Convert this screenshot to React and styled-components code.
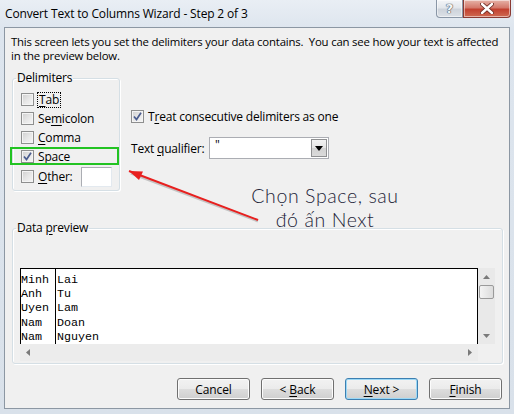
import React from "react";
import styled, { createGlobalStyle } from "styled-components";

const Global = createGlobalStyle`
  html, body { margin: 0; padding: 0; background: #dbe3ec; }
  body { font-family: "Open Sans", "Noto Sans", sans-serif; }
`;

const Frame = styled.div`
  width: 514px;
  height: 414px;
  box-sizing: border-box;
  display: flex;
  flex-direction: column;
  background: linear-gradient(180deg, #e9eef4 0px, #dde5ee 30px, #d9e1ea 100%);
  overflow: hidden;
`;

const TitleBar = styled.div`
  height: 27px;
  flex: none;
  display: flex;
  align-items: flex-start;
  padding: 0 3px 0 5px;
`;

const Title = styled.div`
  flex: 1;
  font-size: 12px;
  line-height: 27px;
  color: #000;
  letter-spacing: -0.15px;
`;

const CaptionButtons = styled.div`
  display: flex;
  height: 18px;
`;

const CaptionButton = styled.div`
  width: ${(p) => p.$w}px;
  height: 18px;
  box-sizing: border-box;
  display: flex;
  align-items: center;
  justify-content: center;
  border: 1px solid ${(p) => (p.$close ? "#8a3a33" : "#8996a6")};
  border-top: none;
  border-radius: ${(p) => (p.$close ? "0 0 4px 0" : "0 0 0 4px")};
  background: ${(p) =>
    p.$close
      ? "linear-gradient(180deg, #e6b3a8 0%, #d4796b 45%, #c2402f 55%, #cf6a52 100%)"
      : "linear-gradient(180deg, #f3f5f8 0%, #e3e7ec 45%, #cdd3db 55%, #dce1e7 100%)"};
  box-shadow: inset 0 0 0 1px rgba(255, 255, 255, 0.5);
  font-family: "DejaVu Sans", sans-serif;
  font-weight: bold;
  color: #fff;
`;

const HelpGlyph = styled.span`
  font-size: 13px;
  color: #f4f6f8;
  text-shadow: 0 0 1px #4a5360, 0 0 1px #4a5360, 0 0 1px #4a5360;
  line-height: 1;
`;

const Client = styled.div`
  position: relative;
  flex: 1;
  margin: 0 4px 5px 4px;
  border: 1px solid #8c97a3;
  background: #f0f0f0;
  display: flex;
  flex-direction: column;
  font-size: 12px;
  color: #000;
`;

const Intro = styled.div`
  margin: 7px 6px 0 6px;
  font-size: 11.4px;
  line-height: 14px;
  letter-spacing: -0.2px;
  white-space: nowrap;
`;

const Middle = styled.div`
  display: flex;
  margin: 8px 0 0 7px;
  gap: 11px;
`;

const Group = styled.fieldset`
  margin: 0;
  box-sizing: border-box;
  width: ${(p) => p.$w}px;
  border: 1px solid #d5dfe5;
  border-radius: 3px;
  box-shadow: inset 1px 1px 0 #fff, 1px 1px 0 #fff;
  padding: ${(p) => p.$pad};
  min-width: 0;
`;

const Legend = styled.legend`
  padding: 0 1px;
  margin-left: ${(p) => p.$ml}px;
  font-size: 12px;
  line-height: 14px;
  letter-spacing: -0.2px;
`;

const CheckRow = styled.div`
  height: ${(p) => p.$h || 19}px;
  display: flex;
  align-items: center;
  gap: 4px;
  letter-spacing: -0.2px;
`;

const Box = styled.span`
  width: 13px;
  height: 13px;
  box-sizing: border-box;
  flex: none;
  border: 1px solid #8e8f8f;
  background: linear-gradient(135deg, #cfcfcf 0%, #e6e6e6 50%, #f6f6f6 100%);
  box-shadow: inset 0 0 0 1px #f4f4f4;
  display: flex;
  align-items: center;
  justify-content: center;
`;

const Focus = styled.span`
  outline: 1px dotted #000;
  outline-offset: 0px;
  padding: 0 1px;
  line-height: 14px;
`;

const U = styled.span`
  text-decoration: underline;
  text-underline-offset: 2px;
`;

const OtherInput = styled.span`
  width: 31px;
  height: 20px;
  box-sizing: border-box;
  margin-left: 4px;
  background: #fff;
  border: 1px solid #abadb3;
  border-color: #abadb3 #e3e9ef #e3e9ef #abadb3;
`;

const RightCol = styled.div`
  display: flex;
  flex-direction: column;
  padding-top: 36px;
`;

const QualRow = styled.div`
  display: flex;
  align-items: center;
  margin-top: 11px;
  letter-spacing: -0.2px;
`;

const QualLabel = styled.span`
  width: 78px;
`;

const Select = styled.div`
  width: 120px;
  height: 22px;
  box-sizing: border-box;
  background: #fff;
  border: 1px solid #abadb3;
  display: flex;
  align-items: stretch;
`;

const SelectValue = styled.span`
  flex: 1;
  padding-left: 5px;
  line-height: 14px;
  font-size: 12px;
`;

const SelectArrow = styled.span`
  width: 16px;
  margin: 1px;
  box-sizing: border-box;
  border: 1px solid #8f9092;
  background: linear-gradient(180deg, #f2f2f2 0%, #e4e4e4 50%, #d2d2d2 51%, #dadada 100%);
  display: flex;
  align-items: center;
  justify-content: center;
`;

const PreviewGroup = styled(Group)`
  margin: 30px 0 0 7px;
`;

const ScrollArea = styled.div`
  display: grid;
  grid-template-columns: 458px 17px;
  grid-template-rows: 76px 17px;
`;

const Sheet = styled.div`
  background: #fff;
  border: 1px solid #000;
  border-bottom: none;
  overflow: hidden;
  position: relative;
  font-family: "Liberation Mono", "Courier New", monospace;
  font-size: 11.7px;
  line-height: 14.2px;
  padding-top: 4px;
`;

const DataRow = styled.div`
  display: flex;
  height: 14.2px;
`;

const Cell = styled.span`
  width: ${(p) => p.$w}px;
  flex: none;
  padding-left: ${(p) => p.$pl || 0}px;
  box-sizing: border-box;
  white-space: nowrap;
`;

const ColLine = styled.div`
  position: absolute;
  left: 34px;
  top: 0;
  bottom: 0;
  width: 1px;
  background: #000;
`;

const VScroll = styled.div`
  background: #e9e9e9;
  display: flex;
  flex-direction: column;
  align-items: center;
  padding-top: 7px;
  box-sizing: border-box;
`;

const Thumb = styled.div`
  width: 15px;
  height: 14px;
  box-sizing: border-box;
  margin-top: 6px;
  border: 1px solid #9a9a9a;
  border-radius: 2px;
  background: linear-gradient(90deg, #f4f4f4, #dcdcdc);
`;

const Spacer = styled.div`
  flex: 1;
`;

const DownArrow = styled.div`
  margin-bottom: 6px;
  display: flex;
`;

const HScroll = styled.div`
  background: #ececec;
  display: flex;
  align-items: center;
  justify-content: space-between;
  padding: 0 6px 0 6px;
`;

const Corner = styled.div`
  background: #f0f0f0;
`;

const ButtonRow = styled.div`
  display: flex;
  justify-content: flex-end;
  gap: 11px;
  margin: 14px 7px 0 0;
`;

const Button = styled.div`
  width: 73px;
  height: 22px;
  box-sizing: border-box;
  border: 1px solid ${(p) => (p.$default ? "#3c7fb1" : "#707070")};
  border-radius: 3px;
  background: linear-gradient(180deg, #f2f2f2 0%, #ebebeb 50%, #dddddd 51%, #cfcfcf 100%);
  box-shadow: inset 0 0 0 1px ${(p) => (p.$default ? "#9bd8f6" : "#fcfcfc")};
  display: flex;
  align-items: center;
  justify-content: center;
  font-size: 12px;
  letter-spacing: -0.1px;
`;

const Highlight = styled.div`
  position: absolute;
  left: 5px;
  top: 119px;
  width: 109px;
  height: 18px;
  box-sizing: border-box;
  border: 2px solid #22c322;
`;

const Note = styled.div`
  position: absolute;
  left: 212px;
  top: 156px;
  width: 216px;
  text-align: center;
  font-family: "Lato", sans-serif;
  font-weight: 300;
  font-size: 19.5px;
  letter-spacing: 0.6px;
  line-height: 24px;
  color: #1d2438;
`;

const ArrowSvg = styled.svg`
  position: absolute;
  left: 118px;
  top: 136px;
  overflow: visible;
`;

function Check() {
  return (
    <svg width="9" height="9" viewBox="0 0 9 9">
      <path d="M1 4.5 L3.5 7.5 L8 0.8" fill="none" stroke="#4b5d8f" strokeWidth="1.7" />
    </svg>
  );
}

function CheckBox({ checked, children }) {
  return (
    <CheckRow>
      <Box>{checked && <Check />}</Box>
      {children}
    </CheckRow>
  );
}

const rows = [
  ["Minh", "Lai"],
  ["Anh", "Tu"],
  ["Uyen", "Lam"],
  ["Nam", "Doan"],
  ["Nam", "Nguyen"],
];

function Tri({ dir }) {
  const d = {
    up: "M0 4 L3.5 0 L7 4 Z",
    down: "M0 0 L7 0 L3.5 4 Z",
    left: "M4 0 L4 7 L0 3.5 Z",
    right: "M0 0 L0 7 L4 3.5 Z",
  }[dir];
  const w = dir === "up" || dir === "down" ? 7 : 4;
  const h = dir === "up" || dir === "down" ? 4 : 7;
  return (
    <svg width={w} height={h} viewBox={`0 0 ${w} ${h}`}>
      <path d={d} fill="#7a7a7a" />
    </svg>
  );
}

export default function App() {
  return (
    <>
      <Global />
      <Frame>
        <TitleBar>
          <Title>Convert Text to Columns Wizard - Step 2 of 3</Title>
          <CaptionButtons>
            <CaptionButton $w={27}>
              <HelpGlyph>?</HelpGlyph>
            </CaptionButton>
            <CaptionButton $w={48} $close>
              <svg width="14" height="11" viewBox="0 0 14 11">
                <path
                  d="M2 1 L12 10 M12 1 L2 10"
                  stroke="#6b2a22"
                  strokeWidth="4.2"
                  strokeLinecap="round"
                />
                <path d="M2 1 L12 10 M12 1 L2 10" stroke="#fff" strokeWidth="2.4" strokeLinecap="round" />
              </svg>
            </CaptionButton>
          </CaptionButtons>
        </TitleBar>
        <Client>
          <Intro>
            This screen lets you set the delimiters your data contains.&nbsp; You can see how your text is affected
            <br />
            in the preview below.
          </Intro>
          <Middle>
            <Group $w={108} $pad="5px 4px 3px 8px">
              <Legend $ml={-5}>Delimiters</Legend>
              <CheckBox>
                <Focus>
                  <U>T</U>ab
                </Focus>
              </CheckBox>
              <CheckBox>
                <span>
                  Se<U>m</U>icolon
                </span>
              </CheckBox>
              <CheckBox>
                <span>
                  <U>C</U>omma
                </span>
              </CheckBox>
              <CheckBox checked>
                <span>
                  <U>S</U>pace
                </span>
              </CheckBox>
              <CheckRow $h={21}>
                <Box />
                <span>
                  <U>O</U>ther:
                </span>
                <OtherInput />
              </CheckRow>
            </Group>
            <RightCol>
              <CheckBox checked>
                <span>
                  T<U>r</U>eat consecutive delimiters as one
                </span>
              </CheckBox>
              <QualRow>
                <QualLabel>
                  Text <U>q</U>ualifier:
                </QualLabel>
                <Select>
                  <SelectValue>"</SelectValue>
                  <SelectArrow>
                    <svg width="8" height="5" viewBox="0 0 8 5">
                      <path d="M0 0 L8 0 L4 5 Z" fill="#000" />
                    </svg>
                  </SelectArrow>
                </Select>
              </QualRow>
            </RightCol>
          </Middle>
          <PreviewGroup $w={491} $pad="33px 5px 2px 7px">
            <Legend $ml={-4}>
              Data <U>p</U>review
            </Legend>
            <ScrollArea>
              <Sheet>
                <ColLine />
                {rows.map(([a, b], i) => (
                  <DataRow key={i}>
                    <Cell $w={35}>{a}</Cell>
                    <Cell $w={200} $pl={1}>
                      {b}
                    </Cell>
                  </DataRow>
                ))}
              </Sheet>
              <VScroll>
                <Tri dir="up" />
                <Thumb />
                <Spacer />
                <DownArrow>
                  <Tri dir="down" />
                </DownArrow>
              </VScroll>
              <HScroll>
                <Tri dir="left" />
                <Tri dir="right" />
              </HScroll>
              <Corner />
            </ScrollArea>
          </PreviewGroup>
          <ButtonRow>
            <Button>Cancel</Button>
            <Button>
              &lt;&nbsp;<U>B</U>ack
            </Button>
            <Button $default>
              <U>N</U>ext &gt;
            </Button>
            <Button>
              <U>F</U>inish
            </Button>
          </ButtonRow>
          <Highlight />
          <Note>
            Chọn Space, sau
            <br />
            đó ấn Next
          </Note>
          <ArrowSvg width="140" height="60" viewBox="0 0 140 60">
            <line x1="8" y1="9" x2="135" y2="57" stroke="rgba(0,0,0,0.18)" strokeWidth="3" />
            <line x1="6" y1="7" x2="135" y2="56" stroke="#e8201f" strokeWidth="2" />
            <path d="M6 7 L20 7.5 L16 16 Z" fill="#e8201f" />
          </ArrowSvg>
        </Client>
      </Frame>
    </>
  );
}
